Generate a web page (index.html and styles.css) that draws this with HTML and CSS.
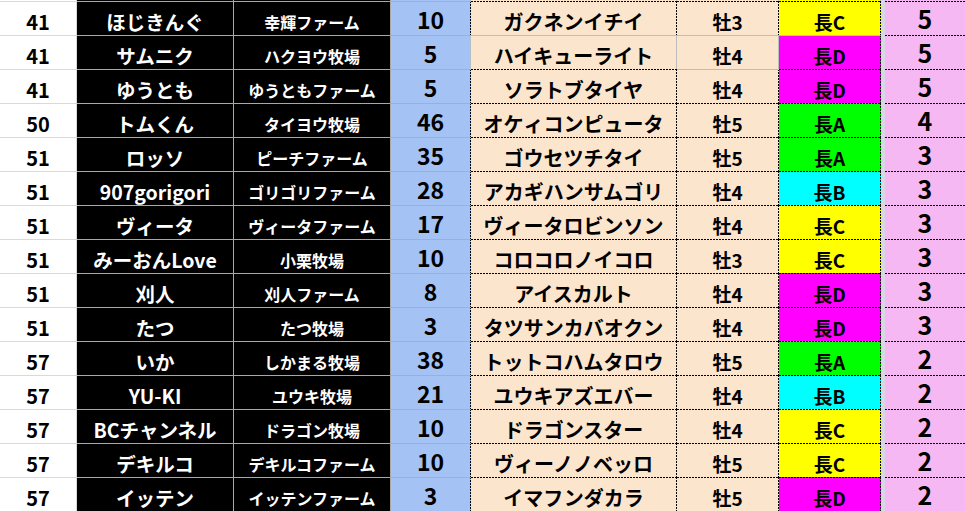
FILE: index.html
```html
<!DOCTYPE html>
<html lang="ja">
<head>
<meta charset="utf-8">
<link rel="stylesheet" href="styles.css">
</head>
<body>
<div class="sheet">
  <div class="c c1 top"></div><div class="c c2 top"></div><div class="c c3 top"></div><div class="c c4 top"></div><div class="c c5 top"></div><div class="c c6 top"></div><div class="c c7 top y"></div><div class="c gap top"></div><div class="c c8 top"></div>

  <div class="c c1">41</div><div class="c c2">ほじきんぐ</div><div class="c c3">幸輝ファーム</div><div class="c c4 dr">10</div><div class="c c5 dt dr">ガクネンイチイ</div><div class="c c6 dt dr">牡3</div><div class="c c7 y dt dr">長C</div><div class="c gap"></div><div class="c c8 dt">5</div>
  <div class="c c1">41</div><div class="c c2">サムニク</div><div class="c c3">ハクヨウ牧場</div><div class="c c4">5</div><div class="c c5">ハイキューライト</div><div class="c c6">牡4</div><div class="c c7 m dr">長D</div><div class="c gap"></div><div class="c c8 dt">5</div>
  <div class="c c1">41</div><div class="c c2">ゆうとも</div><div class="c c3">ゆうともファーム</div><div class="c c4 dr">5</div><div class="c c5 dt dr">ソラトブタイヤ</div><div class="c c6 dr">牡4</div><div class="c c7 m dt dr">長D</div><div class="c gap"></div><div class="c c8 dt">5</div>
  <div class="c c1">50</div><div class="c c2">トムくん</div><div class="c c3">タイヨウ牧場</div><div class="c c4 dr">46</div><div class="c c5 dt dr">オケィコンピュータ</div><div class="c c6 dt dr">牡5</div><div class="c c7 g dt dr">長A</div><div class="c gap"></div><div class="c c8 dt">4</div>
  <div class="c c1">51</div><div class="c c2">ロッソ</div><div class="c c3">ピーチファーム</div><div class="c c4 dr">35</div><div class="c c5 dt dr">ゴウセツチタイ</div><div class="c c6 dt dr">牡5</div><div class="c c7 g dt dr">長A</div><div class="c gap"></div><div class="c c8 dt">3</div>
  <div class="c c1">51</div><div class="c c2">907gorigori</div><div class="c c3">ゴリゴリファーム</div><div class="c c4 dr">28</div><div class="c c5 dt dr">アカギハンサムゴリ</div><div class="c c6 dt dr">牡4</div><div class="c c7 cy dt dr">長B</div><div class="c gap"></div><div class="c c8 dt">3</div>
  <div class="c c1">51</div><div class="c c2">ヴィータ</div><div class="c c3">ヴィータファーム</div><div class="c c4 dr">17</div><div class="c c5 dt dr">ヴィータロビンソン</div><div class="c c6 dt dr">牡4</div><div class="c c7 y dt dr">長C</div><div class="c gap"></div><div class="c c8 dt">3</div>
  <div class="c c1">51</div><div class="c c2">みーおんLove</div><div class="c c3">小栗牧場</div><div class="c c4 dr">10</div><div class="c c5 dt dr">コロコロノイコロ</div><div class="c c6 dt dr">牡3</div><div class="c c7 y dt dr">長C</div><div class="c gap"></div><div class="c c8 dt">3</div>
  <div class="c c1">51</div><div class="c c2">刈人</div><div class="c c3">刈人ファーム</div><div class="c c4 dr">8</div><div class="c c5 dt dr">アイスカルト</div><div class="c c6 dt dr">牡4</div><div class="c c7 m dt dr">長D</div><div class="c gap"></div><div class="c c8 dt">3</div>
  <div class="c c1">51</div><div class="c c2">たつ</div><div class="c c3">たつ牧場</div><div class="c c4 dr">3</div><div class="c c5 dt dr">タツサンカバオクン</div><div class="c c6 dt dr">牡4</div><div class="c c7 m dt dr">長D</div><div class="c gap"></div><div class="c c8 dt">3</div>
  <div class="c c1">57</div><div class="c c2">いか</div><div class="c c3">しかまる牧場</div><div class="c c4 dr">38</div><div class="c c5 dt dr">トットコハムタロウ</div><div class="c c6 dt dr">牡5</div><div class="c c7 g dt dr">長A</div><div class="c gap"></div><div class="c c8 dt">2</div>
  <div class="c c1">57</div><div class="c c2">YU-KI</div><div class="c c3">ユウキ牧場</div><div class="c c4 dr">21</div><div class="c c5 dt dr">ユウキアズエバー</div><div class="c c6 dt dr">牡4</div><div class="c c7 cy dt dr">長B</div><div class="c gap"></div><div class="c c8 dt">2</div>
  <div class="c c1">57</div><div class="c c2">BCチャンネル</div><div class="c c3">ドラゴン牧場</div><div class="c c4 dr">10</div><div class="c c5 dt dr">ドラゴンスター</div><div class="c c6 dt dr">牡4</div><div class="c c7 y dt dr">長C</div><div class="c gap"></div><div class="c c8 dt">2</div>
  <div class="c c1">57</div><div class="c c2">デキルコ</div><div class="c c3">デキルコファーム</div><div class="c c4 dr">10</div><div class="c c5 dt dr">ヴィーノノベッロ</div><div class="c c6 dt dr">牡5</div><div class="c c7 y dt dr">長C</div><div class="c gap"></div><div class="c c8 dt">2</div>
  <div class="c c1">57</div><div class="c c2">イッテン</div><div class="c c3">イッテンファーム</div><div class="c c4 dr">3</div><div class="c c5 dt dr">イマフンダカラ</div><div class="c c6 dt dr">牡5</div><div class="c c7 m dt dr">長D</div><div class="c gap"></div><div class="c c8 dt">2</div>
</div>
</body>
</html>
```

FILE: styles.css
```css
html, body {
  margin: 0;
  padding: 0;
  background: #ffffff;
  overflow: hidden;
}

.sheet {
  display: grid;
  grid-template-columns: 77px 157px 157px 80px 206px 102px 102px 4px 80px;
  width: 965px;
  font-family: "Noto Sans CJK JP", "Noto Sans", sans-serif;
  font-weight: 700;
  color: #000;
}

.c {
  box-sizing: border-box;
  height: 34px;
  border-top: 1px solid #bdbdbd;
  border-right: 1px solid #bdbdbd;
  display: flex;
  align-items: center;
  justify-content: center;
  white-space: nowrap;
  line-height: 1;
  padding-top: 6px;
  background-image: var(--bt, none), var(--br, none);
  background-position: left top, right top;
  background-size: 100% 1px, 1px 100%;
  background-repeat: no-repeat;
  background-origin: border-box;
}

.c.top {
  height: 1px;
  border-top: 0;
  padding: 0;
}

.c1 {
  background-color: #ffffff;
  border-color: #d9d9d9;
  font-size: 20px;
}

.c2 {
  background-color: #000;
  color: #fff;
  border-color: #a8a8a8;
  font-size: 19.5px;
}

.c3 {
  background-color: #000;
  color: #fff;
  border-color: #a8a8a8;
  font-size: 16px;
}

.c4 {
  background-color: #a4c2f4;
  border-top-color: #8fb1ec;
  border-right-color: #b8bfcc;
  font-size: 23px;
  padding-top: 2px;
}

.c5 {
  background-color: #fce5cd;
  font-size: 20px;
}

.c6 {
  background-color: #fce5cd;
  font-size: 19px;
}

.c7 {
  font-size: 19px;
}

.y { background-color: #ffff00; }
.m { background-color: #ff00ff; }
.g { background-color: #00ff00; }
.cy { background-color: #00ffff; }

.gap {
  background-color: #d8d8e4;
  border: 0;
}

.c8 {
  background-color: #f6b8f2;
  border-right: 0;
  border-top-color: #f6b8f2;
  font-size: 25px;
  padding-top: 0;
}

.dt {
  --bt: repeating-linear-gradient(90deg, #000 0 2px, transparent 2px 3px);
  border-top-color: transparent;
}

.dr {
  --br: repeating-linear-gradient(180deg, #000 0 2px, transparent 2px 3px);
  border-right-color: transparent;
}
```
